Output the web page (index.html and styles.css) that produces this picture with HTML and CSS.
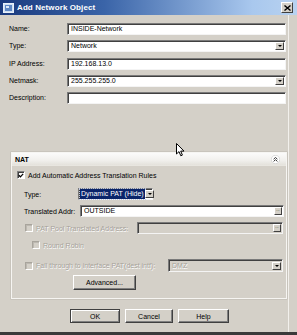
FILE: index.html
```html
<!DOCTYPE html>
<html>
<head>
<meta charset="utf-8">
<link rel="stylesheet" href="styles.css">
</head>
<body>
<div class="win">
  <div class="titlebar">
    <svg class="ticon" width="11" height="10" viewBox="0 0 11 10">
      <rect x="0.5" y="0.5" width="10" height="9" fill="#cfe0f4" stroke="#e8f0fa"/>
      <rect x="2" y="2" width="7" height="6" fill="#5f88c4"/>
      <rect x="3" y="3" width="3" height="2" fill="#dfe9f7"/>
    </svg>
    <span class="ttext">Add Network Object</span>
    <span class="close">
      <svg width="7" height="6" viewBox="0 0 7 6"><path d="M0.5 0.5 L6.5 5.5 M6.5 0.5 L0.5 5.5" stroke="#000" stroke-width="1.4"/></svg>
    </span>
  </div>
  <div class="main">
    <div class="form">
      <span class="lbl">Name:</span>
      <span class="field"><span class="val">INSIDE-Network</span></span>
      <span class="lbl">Type:</span>
      <span class="field combo"><span class="val">Network</span><span class="arrow"></span></span>
      <span class="lbl">IP Address:</span>
      <span class="field"><span class="val">192.168.13.0</span></span>
      <span class="lbl">Netmask:</span>
      <span class="field combo"><span class="val">255.255.255.0</span><span class="arrow"></span></span>
      <span class="lbl">Description:</span>
      <span class="field"></span>
    </div>

    <div class="nat">
      <div class="nathead">
        <span class="nattitle">NAT</span>
        <span class="collapse">
          <svg width="9" height="9" viewBox="0 0 9 9"><circle cx="4.5" cy="4.5" r="4.2" fill="#fff" stroke="#c8c8c8" stroke-width="0.6"/><path d="M2.6 4.2 L4.5 2.5 L6.4 4.2 M2.6 6.4 L4.5 4.7 L6.4 6.4" fill="none" stroke="#333" stroke-width="1"/></svg>
        </span>
      </div>
      <div class="natbody">
        <div class="row r-check">
          <span class="cb checked">
            <svg width="7" height="7" viewBox="0 0 7 7"><path d="M1 3.2 L2.8 5 L6 1.5" fill="none" stroke="#000" stroke-width="1.4"/></svg>
          </span>
          <span class="txt">Add Automatic Address Translation Rules</span>
        </div>
        <div class="row r-type">
          <span class="ilbl">Type:</span>
          <span class="field combo sel"><span class="val hl">Dynamic PAT (Hide)</span><span class="arrow"></span></span>
        </div>
        <div class="row r-trans">
          <span class="ilbl">Translated Addr:</span>
          <span class="field wide"><span class="val">OUTSIDE</span><span class="dots">...</span></span>
        </div>
        <div class="row r-pat">
          <span class="cb dis"></span>
          <span class="txt dtxt">PAT Pool Translated Address:</span>
          <span class="field disf patf"><span class="dots">...</span></span>
        </div>
        <div class="row r-rr">
          <span class="cb dis"></span>
          <span class="txt dtxt">Round Robin</span>
        </div>
        <div class="row r-fall">
          <span class="cb dis"></span>
          <span class="txt dtxt">Fall through to interface PAT(dest intf):</span>
          <span class="field combo disf fallf"><span class="val dval">DMZ</span><span class="arrow"></span></span>
        </div>
        <div class="row r-adv">
          <span class="btn adv">Advanced...</span>
        </div>
      </div>
    </div>

    <div class="buttons">
      <span class="btn ok">OK</span>
      <span class="btn cancel">Cancel</span>
      <span class="btn help">Help</span>
    </div>
  </div>
  <div class="bottomline"></div>

  <svg class="cursor" width="9" height="14" viewBox="0 0 9 14">
    <path d="M0.5 0.5 L0.5 11 L3 8.6 L4.8 12.8 L6.4 12.1 L4.7 8.1 L8 8.1 Z" fill="#fff" stroke="#000" stroke-width="1"/>
  </svg>
</div>
</body>
</html>
```
FILE: styles.css
```css
html, body {
  margin: 0;
  padding: 0;
  background: #d4d0c8;
}
.win {
  position: relative;
  width: 297px;
  height: 335px;
  display: flex;
  flex-direction: column;
  font-family: "Liberation Sans", Arial, sans-serif;
  font-size: 7px;
  color: #000;
  background: #d4d0c8;
  overflow: hidden;
}
.titlebar {
  height: 15px;
  flex: none;
  display: flex;
  align-items: center;
  background: linear-gradient(to right, #1a3a7e 0%, #3a64a8 35%, #a9c8ee 85%, #b8d2f0 100%);
  color: #fff;
}
.ticon {
  margin-left: 3px;
  margin-right: 3px;
}
.ttext {
  font-weight: bold;
  font-size: 8px;
  letter-spacing: 0.1px;
}
.close {
  margin-left: auto;
  margin-right: 4px;
  width: 10px;
  height: 9px;
  background: #d4d0c8;
  border: 1px solid;
  border-color: #fff #404040 #404040 #fff;
  display: flex;
  align-items: center;
  justify-content: center;
}
.main {
  flex: 1;
  width: 288px;
  border-right: 1px solid #f2f0ec;
  display: flex;
  flex-direction: column;
}
.form {
  margin-top: 8px;
  margin-left: 9px;
  width: 277px;
  display: grid;
  grid-template-columns: 58px 1fr;
  grid-auto-rows: 12px;
  row-gap: 5.25px;
  align-items: center;
}
.lbl {
  line-height: 12px;
}
.field {
  position: relative;
  height: 12px;
  box-sizing: border-box;
  background: #fff;
  border: 1px solid;
  border-color: #7a7a7a #f4f4f4 #f4f4f4 #7a7a7a;
  box-shadow: inset 1px 1px 0 #404040;
  display: flex;
  align-items: center;
}
.val {
  padding-left: 3px;
  line-height: 10px;
  white-space: nowrap;
}
.arrow {
  margin-left: auto;
  margin-right: 1px;
  width: 9px;
  height: 8px;
  box-sizing: border-box;
  background: #d4d0c8;
  border: 1px solid;
  border-color: #fff #404040 #404040 #fff;
  position: relative;
  flex: none;
}
.arrow::after {
  content: "";
  position: absolute;
  left: 2px;
  top: 2px;
  border-left: 2px solid transparent;
  border-right: 2px solid transparent;
  border-top: 2px solid #000;
}
.nat {
  margin-top: 48px;
  margin-left: 11px;
  width: 276px;
  height: 147px;
  box-sizing: border-box;
  border: 1px solid #f6f5f2;
  box-shadow: 0 0 0 0.5px #bdb9b0;
  display: flex;
  flex-direction: column;
}
.nathead {
  height: 12px;
  flex: none;
  background: linear-gradient(to bottom, #fbfbfa 0%, #f1f0ed 60%, #e4e2dc 100%);
  display: flex;
  align-items: center;
  border-bottom: 1px solid #e8e6e0;
}
.nattitle {
  font-weight: bold;
  margin-left: 3px;
  font-size: 7px;
}
.collapse {
  margin-left: auto;
  margin-right: 6px;
  display: flex;
}
.natbody {
  display: flex;
  flex-direction: column;
}
.row {
  display: flex;
  align-items: center;
  white-space: nowrap;
}
.cb {
  width: 8px;
  height: 8px;
  box-sizing: border-box;
  border: 1px solid;
  border-color: #808080 #fff #fff #808080;
  box-shadow: inset 1px 1px 0 #404040;
  background: #fff;
  flex: none;
  display: flex;
  align-items: center;
  justify-content: center;
}
.cb.dis {
  background: #d4d0c8;
  border-color: #a8a49c #fff #fff #a8a49c;
  box-shadow: inset 1px 1px 0 #bcb8b0;
}
.txt {
  margin-left: 3px;
}
.dtxt {
  color: #a6a29a;
  text-shadow: 0.6px 0.6px 0 #fff;
}
.r-check {
  height: 10px;
  margin-top: 4px;
  padding-left: 5px;
}
.r-type {
  height: 12px;
  margin-top: 8px;
  padding-left: 12px;
}
.ilbl {
  width: 54px;
  flex: none;
}
.sel {
  width: 75px;
}
.hl {
  background: #0a246a;
  color: #fff;
  padding: 0 1px;
  margin-left: 1px;
  outline: 1px dotted #c0c8e0;
}
.r-trans {
  height: 12px;
  margin-top: 5px;
  padding-left: 12px;
}
.r-trans .ilbl {
  width: 56px;
}
.wide {
  width: 204px;
}
.dots {
  margin-left: auto;
  margin-right: 1px;
  width: 8px;
  height: 8px;
  box-sizing: border-box;
  background: #d4d0c8;
  border: 1px solid;
  border-color: #fff #404040 #404040 #fff;
  font-size: 4px;
  line-height: 4px;
  text-align: center;
  color: #000;
  overflow: hidden;
}
.r-pat {
  height: 12px;
  margin-top: 5px;
  padding-left: 13px;
}
.disf {
  background: #d4d0c8;
}
.patf {
  margin-left: auto;
  margin-right: 3px;
  width: 146px;
}
.r-rr {
  height: 10px;
  margin-top: 6px;
  padding-left: 20px;
}
.r-fall {
  height: 13px;
  margin-top: 9px;
  padding-left: 13px;
}
.fallf {
  margin-left: auto;
  margin-right: 3px;
  width: 115px;
  height: 13px;
}
.dval {
  color: #a6a29a;
  text-shadow: 0.6px 0.6px 0 #fff;
}
.r-adv {
  height: 15px;
  margin-top: 3px;
  padding-left: 61px;
}
.btn {
  box-sizing: border-box;
  height: 15px;
  background: #d4d0c8;
  border: 1px solid;
  border-color: #fff #404040 #404040 #fff;
  box-shadow: inset -1px -1px 0 #808080;
  display: flex;
  align-items: center;
  justify-content: center;
}
.adv {
  width: 63px;
}
.buttons {
  margin-top: 10px;
  display: flex;
  padding-left: 70px;
  gap: 5px;
}
.buttons .btn {
  height: 14px;
}
.ok {
  width: 50px;
  border-color: #404040;
  box-shadow: inset 1px 1px 0 #fff, inset -1px -1px 0 #808080;
}
.cancel {
  width: 48px;
}
.help {
  width: 51px;
}
.bottomline {
  height: 3px;
  flex: none;
  background: #3a3a3a;
}
.cursor {
  position: absolute;
  left: 176px;
  top: 143px;
}
```
